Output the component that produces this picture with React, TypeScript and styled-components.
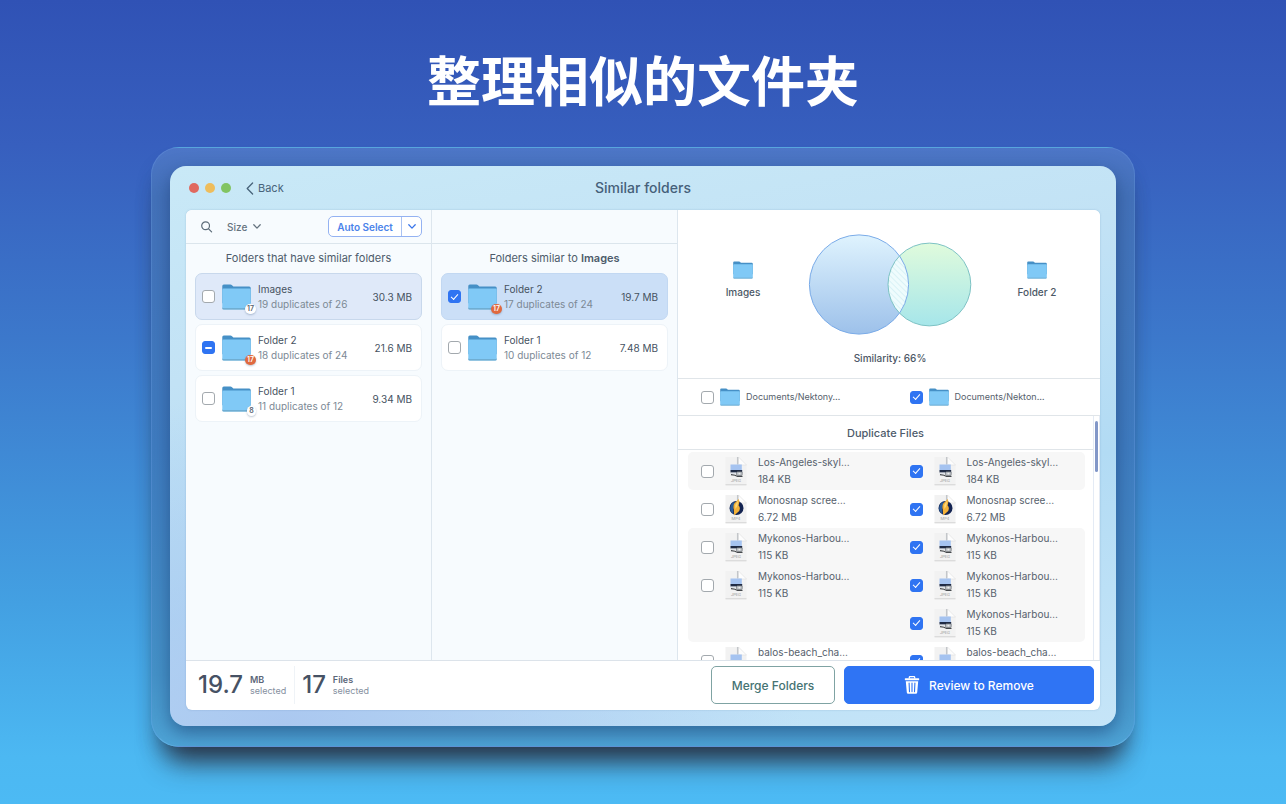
import React from 'react';
import styled, { createGlobalStyle, css } from 'styled-components';

const GlobalStyle = createGlobalStyle`
  *, *::before, *::after { box-sizing: border-box; }
  body {
    margin: 0;
    font-family: Inter, "Noto Sans CJK SC", sans-serif;
    font-size: 12px;
    color: #4c5866;
  }
  button, select, input { font: inherit; margin: 0; }
`;

const Page = styled.main`
  min-height: 100vh;
  padding: 43px 151px 58px;
  background: linear-gradient(180deg, #3052b5 0%, #375fbe 18%, #3c78cb 42%, #43a0e2 75%, #4cb8f2 94%, #4cbaf4 100%);
`;

const Headline = styled.h1`
  margin: 0 0 32px;
  font-family: "Noto Sans CJK SC", sans-serif;
  font-weight: 700;
  font-size: 54px;
  line-height: 72px;
  text-align: center;
  color: #fff;
`;

const Frame = styled.div`
  padding: 18px 18px 20px;
  border: 1px solid rgba(120, 170, 240, 0.25);
  border-bottom-color: rgba(120, 190, 240, 0.45);
  border-radius: 28px;
  background: linear-gradient(180deg, #4d76c7 0%, #4472ba 8%, #3f7cc0 50%, #4592c8 88%, #4ea4d6 100%);
  box-shadow:
    0 30px 28px -16px rgba(40, 40, 50, 0.85),
    0 14px 20px -6px rgba(30, 60, 100, 0.45);
`;

const Window = styled.section`
  padding: 0 16px 16px;
  border-radius: 16px;
  background:
    radial-gradient(ellipse 520px 330px at 12% 100%, #abc8f0 0%, rgba(171, 200, 240, 0) 100%),
    linear-gradient(170deg, #c9e9f7 0%, #c2e2f5 30%, #b2dbf4 62%, #c6e5f8 100%);
  box-shadow: 0 7px 18px rgba(20, 50, 100, 0.5);
`;

const TitleBar = styled.header`
  display: grid;
  grid-template-columns: 1fr auto 1fr;
  align-items: center;
  height: 44px;
`;

const TitleLeft = styled.div`
  display: flex;
  align-items: center;
  gap: 15px;
  padding-left: 3px;
`;

const Lights = styled.div`
  display: flex;
  gap: 6px;
`;

const Light = styled.span<{ $color: string }>`
  width: 10px;
  height: 10px;
  border-radius: 50%;
  background: ${(p) => p.$color};
`;

const BackButton = styled.button`
  display: flex;
  align-items: center;
  gap: 4px;
  padding: 0;
  border: 0;
  background: none;
  font-size: 11px;
  line-height: 16px;
  color: #47637a;
`;

const Title = styled.h2`
  margin: 0;
  font-size: 14px;
  font-weight: 500;
  line-height: 20px;
  color: #45607a;
`;

const Panel = styled.div`
  overflow: hidden;
  border-radius: 6px;
  background: #fff;
  box-shadow: 0 0 2px rgba(80, 120, 170, 0.35);
`;

const Columns = styled.div`
  display: grid;
  grid-template-columns: 246fr 246fr 422fr;
`;

const Column = styled.section`
  border-right: 1px solid #dde6ee;
  background: #f7fbfe;
`;

const Toolbar = styled.div`
  display: flex;
  align-items: center;
  height: 34px;
  padding: 0 9px 0 15px;
  border-bottom: 1px solid #dbe5ec;
`;

const IconButton = styled.button`
  display: flex;
  padding: 0;
  border: 0;
  background: none;
  color: #5b6b78;
`;

const SortBox = styled.label`
  display: flex;
  align-items: center;
  gap: 5px;
  margin: 0 auto 0 14px;
  color: #65737f;
`;

const SortSelect = styled.select`
  appearance: none;
  padding: 0;
  border: 0;
  background: none;
  font-size: 10px;
  font-weight: 500;
  line-height: 16px;
  color: inherit;
`;

const SplitButton = styled.div`
  display: flex;
  height: 21px;
  border: 1px solid #94b2f2;
  border-radius: 5px;
  background: #fff;
  color: #4b83ea;
`;

const SplitMain = styled.button`
  width: 73px;
  padding: 0;
  border: 0;
  border-right: 1px solid #a9c2f2;
  background: none;
  font-size: 10px;
  font-weight: 600;
  color: inherit;
`;

const SplitArrow = styled.button`
  display: flex;
  align-items: center;
  justify-content: center;
  width: 19px;
  padding: 0;
  border: 0;
  background: none;
  color: #3a76ea;
`;

const ColumnTitle = styled.h3`
  margin: 5px 0;
  font-size: 11px;
  font-weight: 400;
  line-height: 19px;
  text-align: center;
  color: #4d5b6b;

  strong { font-weight: 600; }
`;

const CardList = styled.ul`
  display: flex;
  flex-direction: column;
  gap: 4px;
  margin: 0;
  padding: 0 9px;
  list-style: none;
`;

type Tone = 'plain' | 'soft' | 'strong';

const tones = {
  plain: css`
    background: #fff;
    border-color: #edf3f8;
  `,
  soft: css`
    background: #dfe9f9;
    border-color: #c8d8ec;
  `,
  strong: css`
    background: #cbdff7;
    border-color: #c2d8f2;
  `,
};

const Card = styled.li<{ $tone: Tone }>`
  height: 47px;
  border: 1px solid;
  border-radius: 7px;
  ${(p) => tones[p.$tone]}
`;

const CardLabel = styled.label`
  display: flex;
  align-items: center;
  gap: 7px;
  height: 100%;
  padding: 0 9px 0 6px;
`;

const CardText = styled.span`
  flex: 1;
  min-width: 0;
`;

const CardName = styled.span`
  display: block;
  font-size: 10px;
  line-height: 15px;
  color: #46525f;
`;

const CardInfo = styled.span`
  display: block;
  font-size: 10px;
  line-height: 15px;
  color: #7c8995;
`;

const CardSize = styled.span`
  font-size: 10px;
  line-height: 16px;
  color: #46525f;
`;

const FolderSlot = styled.span`
  position: relative;
  display: flex;
`;

const Count = styled.span<{ $hot?: boolean }>`
  position: absolute;
  right: -5px;
  bottom: -4px;
  min-width: 9px;
  padding: 0 2px;
  border-radius: 5px;
  font-size: 7px;
  font-weight: 600;
  line-height: 10px;
  text-align: center;
  color: ${(p) => (p.$hot ? '#fff' : '#56616c')};
  background: ${(p) => (p.$hot ? '#e0693f' : '#fff')};
  box-shadow: 0 1px 2px rgba(40, 70, 110, 0.3);
`;

const Check = styled.input`
  appearance: none;
  flex: none;
  display: grid;
  place-items: center;
  width: 13px;
  height: 13px;
  border: 1px solid #a3a9ae;
  border-radius: 3px;
  background: #fff;

  &:checked, &:indeterminate {
    border-color: #2f74f2;
    background: #2f74f2;
  }
  &:checked::before {
    content: "";
    width: 7px;
    height: 4px;
    margin-bottom: 2px;
    border: solid #fff;
    border-width: 0 0 1px 1px;
    transform: rotate(-48deg);
  }
  &:indeterminate::before {
    content: "";
    width: 7px;
    height: 2px;
    border-radius: 1px;
    background: #fff;
  }
`;

const Details = styled.section`
  min-width: 0;
  background: #fff;
`;

const Compare = styled.div`
  display: grid;
  grid-template-columns: 130px 1fr 130px;
  height: 169px;
  padding-top: 24px;
  border-bottom: 1px solid #e0e5e9;
`;

const Side = styled.div`
  display: flex;
  flex-direction: column;
  align-items: center;
  gap: 5px;
  padding-top: 27px;
  font-size: 10px;
  font-weight: 500;
  line-height: 16px;
`;

const Overlap = styled.figure`
  display: flex;
  flex-direction: column;
  align-items: center;
  gap: 14px;
  margin: 0;
`;

const OverlapCaption = styled.figcaption`
  font-size: 10px;
  font-weight: 500;
  line-height: 17px;
`;

const PathRow = styled.div`
  display: grid;
  grid-template-columns: 1fr 1fr;
  height: 37px;
  padding: 0 15px 0 10px;
  border-bottom: 1px solid #e0e5e9;
`;

const Cell = styled.label<{ $second?: boolean; $wide?: boolean }>`
  display: flex;
  align-items: center;
  gap: ${(p) => (p.$wide ? 11 : 6)}px;
  padding-left: ${(p) => (p.$second ? 23 : 13)}px;
  white-space: nowrap;
`;

const PathText = styled.span`
  font-size: 9px;
  line-height: 16px;
  color: #56616c;
`;

const Scroller = styled.div`
  display: grid;
  grid-template-columns: 1fr 7px;
  height: 244px;
  overflow: hidden;
`;

const Track = styled.div`
  padding: 5px 3px 0 1px;
  border-left: 1px solid #e4ebf5;
  border-right: 1px solid #e4ebf5;
`;

const Thumb = styled.div`
  width: 3px;
  height: 51px;
  border-radius: 2px;
  background: #8297c8;
`;

const ListTitle = styled.h3`
  margin: 0 0 2px;
  border-bottom: 1px solid #e0e5e9;
  font-size: 11px;
  font-weight: 500;
  line-height: 35px;
  height: 34px;
  text-align: center;
  color: #4d5b6b;
`;

const Group = styled.div<{ $shaded: boolean }>`
  margin: 0 8px 0 10px;
  border-radius: 5px;
  background: ${(p) => (p.$shaded ? '#f7f7f7' : '#fff')};
`;

const FileRow = styled.div`
  display: grid;
  grid-template-columns: 1fr 1fr;
  height: 38px;
`;

const FileText = styled.span`
  font-size: 10px;
  line-height: 17px;
  color: #56616c;

  span {
    display: block;
    min-height: 17px;
  }
`;

const Footer = styled.footer`
  display: flex;
  align-items: center;
  height: 50px;
  padding: 0 6px 1px 12px;
  border-top: 1px solid #dce3ea;
`;

const Stat = styled.div`
  display: flex;
  align-items: center;
  gap: 7px;
  height: 38px;

  & + & {
    margin-left: 8px;
    padding-left: 7px;
    border-left: 1px solid #eff3f7;
  }
`;

const StatNumber = styled.strong`
  font-size: 24px;
  font-weight: 500;
  line-height: 28px;
  color: #465164;
`;

const StatText = styled.span`
  font-size: 9px;
  line-height: 11px;
  color: #8590a0;

  b {
    display: block;
    font-weight: 600;
    color: #5a6678;
  }
`;

const Actions = styled.div`
  display: flex;
  gap: 9px;
  margin-left: auto;
`;

const ActionButton = styled.button<{ $primary?: boolean }>`
  display: flex;
  align-items: center;
  justify-content: center;
  gap: 9px;
  width: ${(p) => (p.$primary ? 250 : 124)}px;
  height: 38px;
  border: 1px solid ${(p) => (p.$primary ? '#2f74f4' : '#7fa3a3')};
  border-radius: 5px;
  font-size: 12px;
  font-weight: 500;
  color: ${(p) => (p.$primary ? '#fff' : '#457373')};
  background: ${(p) => (p.$primary ? '#2f74f4' : '#fff')};
`;

const FolderIcon = ({ width, height }: { width: number; height: number }) => (
  <svg width={width} height={height} viewBox="0 0 31 27" preserveAspectRatio="none" aria-hidden="true">
    <path d="M0.3 2.2Q0.3 0.6 1.9 0.6H9q1 0 1.7 0.7L12.2 2.6H29.1q1.6 0 1.6 1.6V20H0.3Z" fill="#4690c6" />
    <path d="M0.3 6.2Q0.3 4.8 1.7 4.8H29.4q1.3 0 1.3 1.3V24.8q0 1.6-1.6 1.6H1.9q-1.6 0-1.6-1.6Z" fill="#80c9f6" />
    <path d="M0.3 24.2v0.6q0 1.6 1.6 1.6H29.1q1.6 0 1.6-1.6v-0.6q-0.4 1.1-1.6 1.1H1.9q-1.2 0-1.6-1.1Z" fill="#6aa5c8" />
  </svg>
);

const Chevron = () => (
  <svg width="8" height="5" viewBox="0 0 8 5" fill="none" stroke="currentColor" strokeWidth="1.3" strokeLinecap="round" strokeLinejoin="round" aria-hidden="true">
    <path d="M0.8 0.8 4 4.1 7.2 0.8" />
  </svg>
);

const FileIcon = ({ kind }: { kind: 'JPEG' | 'MP4' }) => (
  <svg width="22" height="30" viewBox="0 0 22 30" aria-hidden="true">
    <path d="M0.5 1H13.5L21.5 9V29H0.5Z" fill="#f2f2f2" />
    <path d="M0.5 28.8H21.5" stroke="#cbcbcb" strokeWidth="0.8" />
    <path d="M13.5 1 21.5 9H15Q13.5 9 13.5 7.5Z" fill="#fdfdfd" stroke="#d8d8d8" strokeWidth="0.5" />
    <path d="M12.6 1V8.6" stroke="#c3c6ca" strokeWidth="1.3" />
    {kind === 'JPEG' ? (
      <g>
        <path d="M5.5 8.5H16.8V14.4H5.5Z" fill="#a5c3f0" />
        <path d="M5.5 14H17.2V16.6H5.5Z" fill="#1f2b45" />
        <path d="M5.5 16.6H11.5V18H5.5Z" fill="#dfe4ea" />
        <path d="M6 18.6 10 19.3 12.5 20.4H17.5" fill="none" stroke="#44484c" strokeWidth="1.1" />
        <rect x="11.6" y="15.8" width="5.6" height="3.6" rx="0.8" fill="#c4c9ce" stroke="#50555a" strokeWidth="0.6" />
        <circle cx="14.4" cy="17.6" r="0.9" fill="#eee" />
      </g>
    ) : (
      <g>
        <circle cx="11.5" cy="14" r="7" fill="#142452" />
        <path d="M8 8.4Q4 11.5 5.6 17L8.6 20Q7 14 10 8Z" fill="#2a5c9a" />
        <path d="M13.8 5 9.2 9.6Q7.8 12.4 8.8 15.4L9.2 21.6 14.2 17Q15.8 13.6 13.6 11.4L14.4 8Z" fill="#f3b23a" />
        <path d="M13.2 6.4 10.2 11 10.4 15 12.4 12Z" fill="#fcd878" />
      </g>
    )}
    <text x="11" y="26" textAnchor="middle" fontFamily="Inter, sans-serif" fontSize="4" fill="#9b9b9b">{kind}</text>
  </svg>
);

const Venn = () => (
  <svg width="164" height="102" viewBox="0 0 164 102" role="img" aria-label="Overlap of Images and Folder 2">
    <defs>
      <linearGradient id="blue" x1="0" y1="0" x2="0" y2="1">
        <stop offset="0" stopColor="#dff3fe" />
        <stop offset="1" stopColor="#9dc1ea" />
      </linearGradient>
      <linearGradient id="green" x1="0" y1="0" x2="0" y2="1">
        <stop offset="0" stopColor="#e0fbdc" />
        <stop offset="1" stopColor="#a6e6ea" />
      </linearGradient>
      <pattern id="hatch" width="4" height="4" patternUnits="userSpaceOnUse" patternTransform="rotate(-45)">
        <rect width="4" height="4" fill="#effcfd" />
        <path d="M0.5 0V4" stroke="#d3f0f4" strokeWidth="0.8" />
      </pattern>
      <clipPath id="inBlue"><circle cx="51" cy="50.5" r="49.6" /></clipPath>
    </defs>
    <circle cx="51" cy="50.5" r="49.6" fill="url(#blue)" />
    <circle cx="121.4" cy="50.5" r="41.4" fill="url(#green)" />
    <circle cx="121.4" cy="50.5" r="41.4" fill="url(#hatch)" clipPath="url(#inBlue)" />
    <circle cx="121.4" cy="50.5" r="41.4" fill="none" stroke="#7dc2c4" />
    <circle cx="51" cy="50.5" r="49.6" fill="none" stroke="#7aabe8" />
  </svg>
);

const TrashIcon = () => (
  <svg width="16" height="18" viewBox="0 0 16 18" aria-hidden="true">
    <path d="M5.3 2.5V1.4Q5.3 0.7 6 0.7H10Q10.7 0.7 10.7 1.4V2.5" fill="none" stroke="#fff" strokeWidth="1.3" />
    <rect x="0.8" y="2.2" width="14.4" height="2" rx="0.6" fill="#fff" />
    <path d="M1.8 5.2H14.2L13.2 16.4Q13.1 17.7 11.8 17.7H4.2Q2.9 17.7 2.8 16.4Z" fill="#fff" />
    <path d="M5.1 7 5.5 15.6M8 7V15.6M10.9 7 10.5 15.6" stroke="#2f74f4" strokeWidth="1.1" strokeLinecap="round" />
  </svg>
);

type FolderEntry = {
  name: string;
  info: string;
  size: string;
  state: 'off' | 'on' | 'mixed';
  tone: Tone;
  count?: string;
  hot?: boolean;
};

const withSimilar: FolderEntry[] = [
  { name: 'Images', info: '19 duplicates of 26', size: '30.3 MB', state: 'off', tone: 'soft', count: '17' },
  { name: 'Folder 2', info: '18 duplicates of 24', size: '21.6 MB', state: 'mixed', tone: 'plain', count: '17', hot: true },
  { name: 'Folder 1', info: '11 duplicates of 12', size: '9.34 MB', state: 'off', tone: 'plain', count: '8' },
];

const similarTo: FolderEntry[] = [
  { name: 'Folder 2', info: '17 duplicates of 24', size: '19.7 MB', state: 'on', tone: 'strong', count: '17', hot: true },
  { name: 'Folder 1', info: '10 duplicates of 12', size: '7.48 MB', state: 'off', tone: 'plain' },
];

type FileEntry = { name: string; size?: string; kind: 'JPEG' | 'MP4'; rightOnly?: boolean };

const mykonos: FileEntry = { name: 'Mykonos-Harbou…', size: '115 KB', kind: 'JPEG' };

const groups: FileEntry[][] = [
  [{ name: 'Los-Angeles-skyl…', size: '184 KB', kind: 'JPEG' }],
  [{ name: 'Monosnap scree…', size: '6.72 MB', kind: 'MP4' }],
  [mykonos, mykonos, { ...mykonos, rightOnly: true }],
  [{ name: 'balos-beach_cha…', kind: 'JPEG' }],
];

const FolderCards = ({ items }: { items: FolderEntry[] }) => (
  <CardList>
    {items.map((f) => (
      <Card key={f.name} $tone={f.tone}>
        <CardLabel>
          <Check
            type="checkbox"
            defaultChecked={f.state === 'on'}
            ref={(el: HTMLInputElement | null) => {
              if (el) el.indeterminate = f.state === 'mixed';
            }}
          />
          <FolderSlot>
            <FolderIcon width={29} height={26} />
            {f.count && <Count $hot={f.hot}>{f.count}</Count>}
          </FolderSlot>
          <CardText>
            <CardName>{f.name}</CardName>
            <CardInfo>{f.info}</CardInfo>
          </CardText>
          <CardSize>{f.size}</CardSize>
        </CardLabel>
      </Card>
    ))}
  </CardList>
);

const FileCell = ({ file, selected }: { file: FileEntry; selected?: boolean }) => (
  <Cell $second={selected} $wide>
    <Check type="checkbox" defaultChecked={selected} />
    <FileIcon kind={file.kind} />
    <FileText>
      <span>{file.name}</span>
      <span>{file.size}</span>
    </FileText>
  </Cell>
);

export default function App() {
  return (
    <>
      <GlobalStyle />
      <Page>
        <Headline>整理相似的文件夹</Headline>
        <Frame>
          <Window>
            <TitleBar>
              <TitleLeft>
                <Lights>
                  <Light $color="#e0695f" />
                  <Light $color="#eebd5c" />
                  <Light $color="#82c462" />
                </Lights>
                <BackButton type="button">
                  <svg width="8" height="13" viewBox="0 0 8 13" fill="none" stroke="currentColor" strokeWidth="1.3" strokeLinecap="round" strokeLinejoin="round" aria-hidden="true">
                    <path d="M6.6 1 1.2 6.5 6.6 12" />
                  </svg>
                  Back
                </BackButton>
              </TitleLeft>
              <Title>Similar folders</Title>
            </TitleBar>
            <Panel>
              <Columns>
                <Column>
                  <Toolbar>
                    <IconButton type="button" aria-label="Search">
                      <svg width="12" height="12" viewBox="0 0 12 12" fill="none" stroke="currentColor" strokeWidth="1.2" strokeLinecap="round" aria-hidden="true">
                        <circle cx="4.6" cy="4.8" r="3.9" />
                        <path d="M7.6 7.8 10.6 10.8" />
                      </svg>
                    </IconButton>
                    <SortBox>
                      <SortSelect aria-label="Sort by" defaultValue="Size">
                        <option>Size</option>
                      </SortSelect>
                      <Chevron />
                    </SortBox>
                    <SplitButton>
                      <SplitMain type="button">Auto Select</SplitMain>
                      <SplitArrow type="button" aria-label="Auto Select options">
                        <Chevron />
                      </SplitArrow>
                    </SplitButton>
                  </Toolbar>
                  <ColumnTitle>Folders that have similar folders</ColumnTitle>
                  <FolderCards items={withSimilar} />
                </Column>
                <Column>
                  <Toolbar />
                  <ColumnTitle>
                    Folders similar to <strong>Images</strong>
                  </ColumnTitle>
                  <FolderCards items={similarTo} />
                </Column>
                <Details>
                  <Compare>
                    <Side>
                      <FolderIcon width={20} height={18} />
                      Images
                    </Side>
                    <Overlap>
                      <Venn />
                      <OverlapCaption>Similarity: 66%</OverlapCaption>
                    </Overlap>
                    <Side>
                      <FolderIcon width={20} height={18} />
                      Folder 2
                    </Side>
                  </Compare>
                  <PathRow>
                    <Cell>
                      <Check type="checkbox" />
                      <FolderIcon width={20} height={18} />
                      <PathText>Documents/Nektony…</PathText>
                    </Cell>
                    <Cell $second>
                      <Check type="checkbox" defaultChecked />
                      <FolderIcon width={20} height={18} />
                      <PathText>Documents/Nekton…</PathText>
                    </Cell>
                  </PathRow>
                  <Scroller>
                    <div>
                      <ListTitle>Duplicate Files</ListTitle>
                      {groups.map((files, g) => (
                        <Group key={g} $shaded={g % 2 === 0}>
                          {files.map((file, i) => (
                            <FileRow key={i}>
                              {file.rightOnly ? <span /> : <FileCell file={file} />}
                              <FileCell file={file} selected />
                            </FileRow>
                          ))}
                        </Group>
                      ))}
                    </div>
                    <Track>
                      <Thumb />
                    </Track>
                  </Scroller>
                </Details>
              </Columns>
              <Footer>
                <Stat>
                  <StatNumber>19.7</StatNumber>
                  <StatText>
                    <b>MB</b>selected
                  </StatText>
                </Stat>
                <Stat>
                  <StatNumber>17</StatNumber>
                  <StatText>
                    <b>Files</b>selected
                  </StatText>
                </Stat>
                <Actions>
                  <ActionButton type="button">Merge Folders</ActionButton>
                  <ActionButton type="button" $primary>
                    <TrashIcon />
                    Review to Remove
                  </ActionButton>
                </Actions>
              </Footer>
            </Panel>
          </Window>
        </Frame>
      </Page>
    </>
  );
}
